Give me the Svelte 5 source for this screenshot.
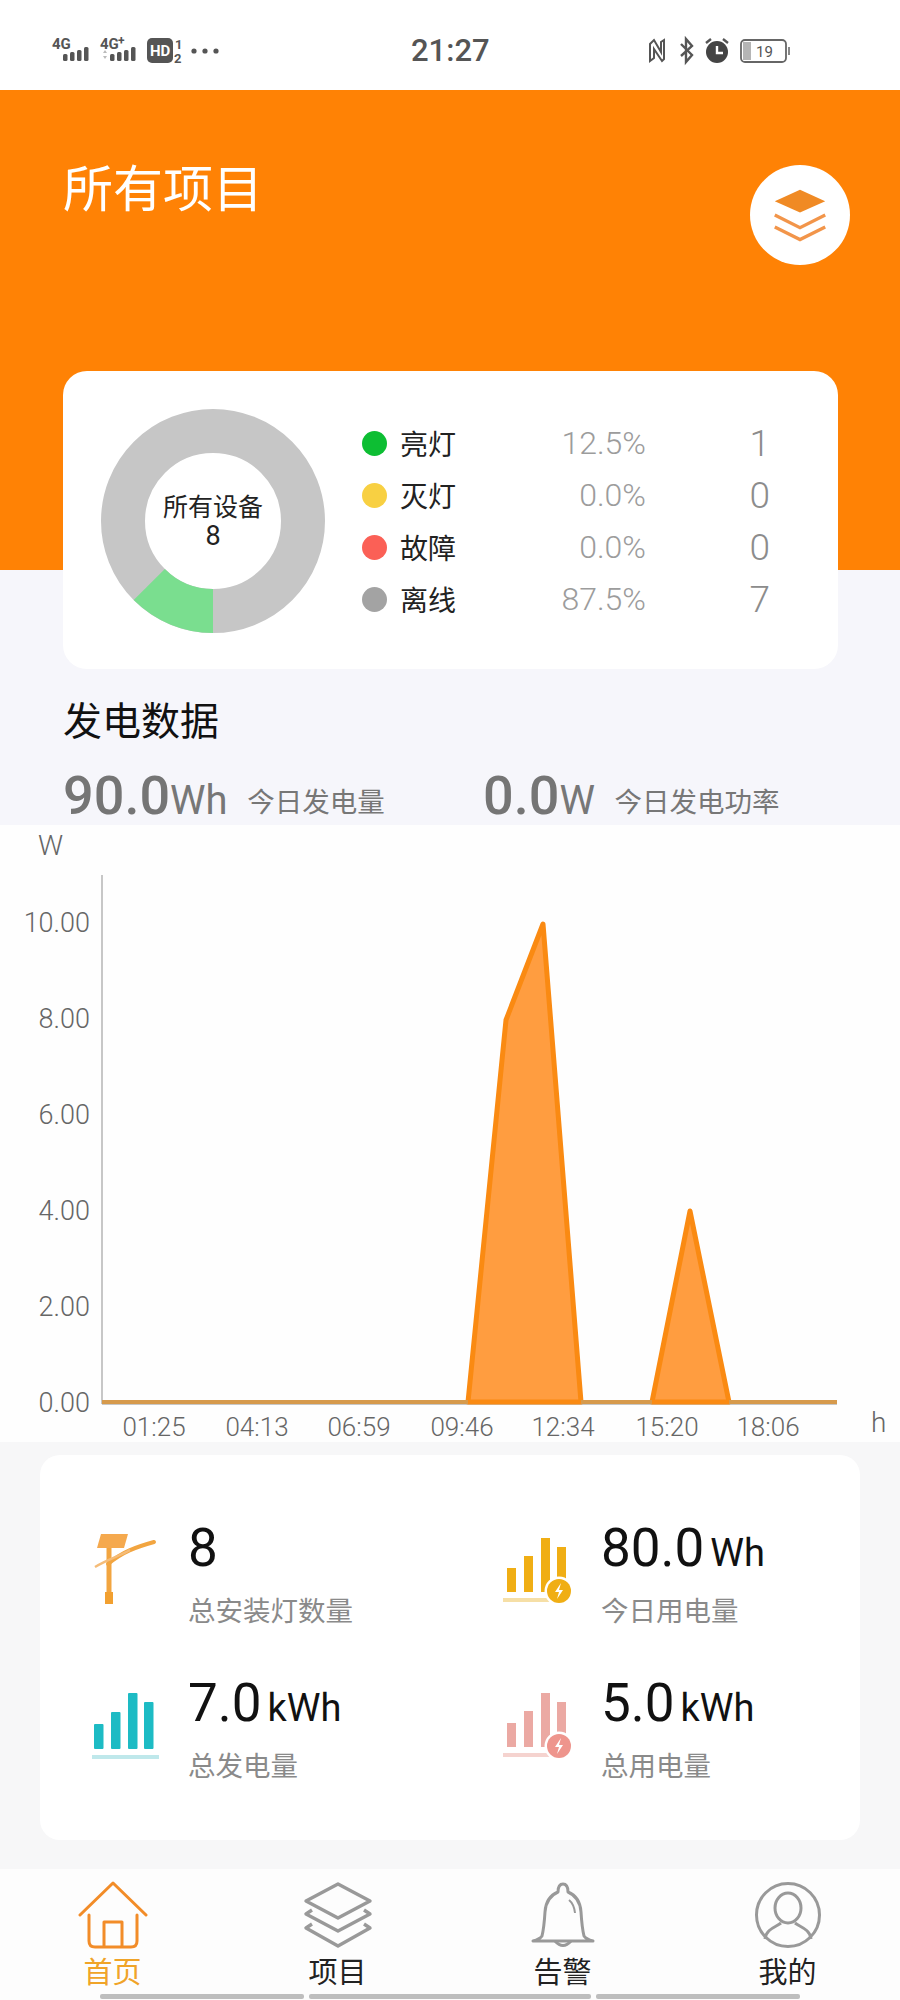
<script>
  const legend = [
    { label: '亮灯', color: '#0DBE33', pct: '12.5%', count: 1 },
    { label: '灭灯', color: '#F8D042', pct: '0.0%', count: 0 },
    { label: '故障', color: '#FB6056', pct: '0.0%', count: 0 },
    { label: '离线', color: '#A3A3A3', pct: '87.5%', count: 7 }
  ];

  const yTicks = [
    { label: '10.00', y: 99 },
    { label: '8.00', y: 195 },
    { label: '6.00', y: 291 },
    { label: '4.00', y: 387 },
    { label: '2.00', y: 483 },
    { label: '0.00', y: 579 }
  ];

  const xTicks = [
    { label: '01:25', x: 154 },
    { label: '04:13', x: 257 },
    { label: '06:59', x: 359 },
    { label: '09:46', x: 462 },
    { label: '12:34', x: 563 },
    { label: '15:20', x: 667 },
    { label: '18:06', x: 768 }
  ];

  // chart origin is y=823 on the page
  const peaks = [
    '468,577 506,195 543,99 581,577',
    '652,577 690,386 729,577'
  ];

  const stats = [
    { kind: 'lamp', value: '8', unit: '', label: '总安装灯数量' },
    { kind: 'use', color: '#F0AE14', ring: '#F0AE14', base: '#F6DFA6', value: '80.0', unit: 'Wh', label: '今日用电量' },
    { kind: 'gen', value: '7.0', unit: 'kWh', label: '总发电量' },
    { kind: 'use', color: '#EBA9A3', ring: '#EE958D', base: '#F5D3CF', value: '5.0', unit: 'kWh', label: '总用电量' }
  ];

  const tabs = [
    { icon: 'home', label: '首页', active: true },
    { icon: 'layers', label: '项目' },
    { icon: 'bell', label: '告警' },
    { icon: 'user', label: '我的' }
  ];

  const barsUse = [[4, 42, 24], [21, 30, 36], [38, 12, 54], [54, 21, 36]];
  const barsGen = [[4, 43, 25], [21, 31, 37], [38, 12, 56], [54, 21, 47]];
</script>

<div class="page">
  <div class="status">
    <svg class="status-left" width="200" height="40" viewBox="0 -3 200 40">
      <g fill="#555">
        <text x="2" y="13" class="net">4G</text>
        <rect x="13" y="18" width="4.5" height="7" rx="1.5" />
        <rect x="20" y="16" width="4.5" height="9" rx="1.5" />
        <rect x="27" y="14" width="4.5" height="11" rx="1.5" />
        <rect x="34" y="11" width="4.5" height="14" rx="1.5" />
        <text x="50" y="13" class="net">4G</text>
        <text x="68" y="9" class="plus">+</text>
        <path d="M53 17l2-3 2 3zM53 20l2 3 2-3z" fill="#bbb" />
        <rect x="60" y="18" width="4.5" height="7" rx="1.5" />
        <rect x="67" y="16" width="4.5" height="9" rx="1.5" />
        <rect x="74" y="14" width="4.5" height="11" rx="1.5" />
        <rect x="81" y="11" width="4.5" height="14" rx="1.5" />
        <rect x="97" y="2" width="26" height="25" rx="5" />
        <text x="100" y="20" class="hd">HD</text>
        <text x="125" y="13" class="sim">1</text>
        <text x="124" y="27" class="sim">2</text>
        <circle cx="144" cy="15" r="2.6" />
        <circle cx="155" cy="15" r="2.6" />
        <circle cx="166" cy="15" r="2.6" />
      </g>
    </svg>
    <div class="time">21:27</div>
    <svg class="status-right" width="150" height="40" viewBox="0 0 150 40">
      <g fill="none" stroke="#555" stroke-width="2.6">
        <path d="M1 8v17l4-3V13l8 12 2-2V4l-3 2v10L5 4z" stroke-width="2" />
        <path d="M32 8l11 11-6 7V3l6 7-11 10" stroke-width="2.4" />
      </g>
      <circle cx="68" cy="16" r="11" fill="#444" />
      <path d="M68 10v7h6" fill="none" stroke="#fff" stroke-width="2.4" />
      <path d="M57 7l5-4M79 7l-5-4" stroke="#555" stroke-width="2.4" />
      <rect x="92" y="4" width="45" height="22" rx="4" fill="#fff" stroke="#666" stroke-width="1.8" />
      <rect x="94" y="6" width="8" height="18" fill="#b5b5b5" />
      <rect x="139" y="11" width="2" height="8" fill="#888" />
      <text x="107" y="20.5" class="batt">19</text>
    </svg>
  </div>

  <div class="hero">
    <h1>所有项目</h1>
    <div class="switch">
      <svg width="58" height="58" viewBox="0 0 46 46">
        <path d="M23 3l20 9-20 9-20-9z" fill="#F08A24" />
        <path d="M3 23l20 10 20-10M3 32.5l20 10 20-10" fill="none" stroke="#F2954A" stroke-width="2.6" />
      </svg>
    </div>
  </div>

  <div class="summary">
    <div class="donut">
      <svg width="226" height="226" viewBox="0 0 226 226">
        <circle cx="113" cy="113" r="90" fill="none" stroke="#C6C6C6" stroke-width="44" />
        <circle cx="113" cy="113" r="90" fill="none" stroke="#7ADE8F" stroke-width="44"
          stroke-dasharray="70.69 565.49" transform="rotate(90 113 113)" />
      </svg>
      <div class="donut-text">
        <span>所有设备</span>
        <span class="donut-count">8</span>
      </div>
    </div>
    <div class="legend">
      {#each legend as row}
        <span class="dot" style:background={row.color}></span>
        <span class="legend-label">{row.label}</span>
        <span class="legend-pct">{row.pct}</span>
        <span class="legend-count">{row.count}</span>
      {/each}
    </div>
  </div>

  <div class="power">
    <h2>发电数据</h2>
    <div class="power-row">
      <div class="power-item first">
        <span class="power-value">90.0</span><span class="power-unit">Wh</span>
        <span class="power-label">今日发电量</span>
      </div>
      <div class="power-item">
        <span class="power-value">0.0</span><span class="power-unit">W</span>
        <span class="power-label">今日发电功率</span>
      </div>
    </div>
  </div>

  <div class="chart">
    <svg width="900" height="617" viewBox="0 0 900 617">
      <text x="38" y="30" class="axis-unit">W</text>
      <line x1="102" y1="50" x2="102" y2="579" stroke="#B5B5B5" stroke-width="1.5" />
      <line x1="102" y1="579" x2="837" y2="579" stroke="#B5B5B5" stroke-width="1.5" />
      {#each yTicks as t}
        <text x="90" y={t.y + 8} text-anchor="end" class="tick-y">{t.label}</text>
      {/each}
      {#each xTicks as t}
        <text x={t.x} y="611" text-anchor="middle" class="tick-x">{t.label}</text>
      {/each}
      <text x="871" y="607" class="axis-unit">h</text>
      {#each peaks as p}
        <polygon points={p} fill="#FF9D40" stroke="#FA8A12" stroke-width="5" stroke-linejoin="round" />
      {/each}
      <path d="M102 577H468M581 577H652M729 577H837" stroke="#D69A4C" stroke-width="4" fill="none" />
    </svg>
  </div>

  <div class="lower">
    <div class="totals">
      {#each stats as s}
        <div class="total">
          <svg class="total-icon" width="80" height="84" viewBox="0 0 80 84">
            {#if s.kind === 'lamp'}
              <path d="M11 8h27l-4 14H7z" fill="#F5A94E" />
              <path d="M19 22v48" stroke="#F2A540" stroke-width="5" fill="none" />
              <path d="M15 66h8v12h-8z" fill="#F2A030" />
              <path d="M18 38C32 26 46 21 64 16" stroke="#F2A540" stroke-width="4" fill="none" stroke-linecap="round" />
              <path d="M5 41C18 33 30 30 40 24" stroke="#F5BC78" stroke-width="2.4" fill="none" />
            {:else if s.kind === 'gen'}
              {#each barsGen as b}
                <rect x={b[0]} y={b[1]} width="9.5" height={b[2]} rx="1" fill="#1DBBC4" />
              {/each}
              <rect x="2" y="74" width="67" height="4" fill="#BFE8EB" />
            {:else}
              {#each barsUse as b}
                <rect x={b[0]} y={b[1]} width="9" height={b[2]} fill={s.color} />
              {/each}
              <rect x="0" y="72" width="48" height="4" fill={s.base} />
              <circle cx="56" cy="65" r="14.5" fill="#fff" />
              <circle cx="56" cy="65" r="12" fill={s.ring} />
              <path d="M58 57l-6 9h4l-2 7 6-9h-4z" fill="#fff" />
            {/if}
          </svg>
          <div class="total-text">
            <div class="total-value">{s.value}{#if s.unit}<small>{s.unit}</small>{/if}</div>
            <div class="total-label">{s.label}</div>
          </div>
        </div>
      {/each}
    </div>
  </div>

  <div class="tabbar">
    <div class="tabs">
      {#each tabs as tab}
        <div class="tab" class:active={tab.active}>
          <svg width="70" height="68" viewBox="0 0 70 68">
            {#if tab.icon === 'home'}
              <g fill="none" stroke="#F28C28" stroke-width="3" stroke-linejoin="round" stroke-linecap="round">
                <path d="M2 34L35 2l33 32" />
                <path d="M11 34v26q0 6 6 6h36q6 0 6-6V34" />
                <path d="M26 65V41h18v24" />
              </g>
            {:else if tab.icon === 'layers'}
              <g fill="none" stroke="#999" stroke-width="3.4" stroke-linejoin="round">
                <path d="M35 3l32 17-32 17L3 20z" />
                <path d="M9 29L3 33l32 17 32-17-6-4" />
                <path d="M9 43L3 47l32 18 32-18-6-4" />
              </g>
            {:else if tab.icon === 'bell'}
              <g fill="none" stroke="#999" stroke-width="3" stroke-linejoin="round">
                <path d="M35 3q-5 0-5 8-12 5-13 20-1 16-3 24-2 3-9 5h60q-7-2-9-5-2-8-3-24-1-15-13-20 0-8-5-8z" />
                <path d="M27 60q8 9 16 0" />
                <path d="M41 19q5 4 6 13" stroke-width="2" />
              </g>
            {:else}
              <g fill="none" stroke="#999" stroke-width="3">
                <circle cx="35" cy="34" r="31.5" />
                <ellipse cx="35" cy="27" rx="13" ry="15" />
                <path d="M12 58c1-10 11-12 16-16M58 58c-1-10-11-12-16-16" />
              </g>
            {/if}
          </svg>
          <span>{tab.label}</span>
        </div>
      {/each}
    </div>
    <div class="home-bars">
      <i class="side"></i><i class="mid"></i><i class="side"></i>
    </div>
  </div>
</div>

<style>
  :global(body) { margin: 0; background: #f6f6fa; }

  .page {
    width: 900px;
    height: 2000px;
    overflow: hidden;
    background: #f6f6fb;
    font-family: "Noto Sans CJK SC", "Noto Sans", sans-serif;
    display: flex;
    flex-direction: column;
  }

  .status {
    height: 90px;
    flex: none;
    box-sizing: border-box;
    padding: 33px 0 0 50px;
    background: #fff;
    display: grid;
    grid-template-columns: 361px 78px 1fr;
    align-items: start;
  }
  .status svg { display: block; }
  .status-right { margin: 3px 0 0 160px; }
  .time { font: 500 31px/36px Roboto, sans-serif; color: #555; text-align: center; }
  .net { font: 700 15px Roboto, sans-serif; }
  .plus { font: 700 12px Roboto, sans-serif; }
  .hd { font: 700 15px Roboto, sans-serif; fill: #fff; }
  .sim { font: 700 13px Roboto, sans-serif; }
  .batt { font: 400 15px Roboto, sans-serif; fill: #555; }

  .hero {
    height: 480px;
    flex: none;
    box-sizing: border-box;
    padding: 65px 50px 0 63px;
    background: #FF8205;
    display: flex;
    justify-content: space-between;
    align-items: flex-start;
  }
  h1 { margin: 0; font-size: 50px; line-height: 60px; font-weight: 400; color: #fff; }
  .switch {
    width: 100px;
    height: 100px;
    margin-top: 10px;
    border-radius: 50%;
    background: #fff;
    display: flex;
    align-items: center;
    justify-content: center;
  }

  .summary {
    height: 298px;
    flex: none;
    box-sizing: border-box;
    margin: -199px 62px 0 63px;
    padding: 37px 0 0 37px;
    background: #fff;
    border-radius: 24px;
    display: flex;
  }
  .donut { position: relative; width: 226px; height: 226px; flex: none; }
  .donut svg { display: block; }
  .donut-text {
    position: absolute;
    inset: 0;
    display: flex;
    flex-direction: column;
    align-items: center;
    justify-content: center;
    font-size: 25px;
    line-height: 30px;
    color: #222;
  }
  .donut-count { font-family: Roboto, sans-serif; font-size: 27px; line-height: 32px; }

  .legend {
    margin: 9px 0 0 36px;
    display: grid;
    grid-template-columns: 25px 120px 139px 124px;
    grid-auto-rows: 52px;
    align-items: center;
    align-self: flex-start;
  }
  .dot { width: 25px; height: 25px; border-radius: 50%; }
  .legend-label { margin-left: 13px; font-size: 28px; color: #222; }
  .legend-pct { font: 300 32px Roboto, sans-serif; color: #9c9c9c; text-align: right; }
  .legend-count { font: 300 37px Roboto, sans-serif; color: #8c8c8c; text-align: right; }

  .power {
    height: 156px;
    flex: none;
    box-sizing: border-box;
    padding: 24px 0 0 63px;
  }
  h2 { margin: 0; font-size: 39px; line-height: 50px; font-weight: 400; color: #111; }
  .power-row { margin-top: 23px; display: flex; align-items: baseline; }
  .power-item { white-space: nowrap; }
  .power-item.first { width: 420px; }
  .power-value { font: 500 54px/60px Roboto, sans-serif; color: #757575; }
  .power-unit { font: 400 40px Roboto, sans-serif; color: #777; }
  .power-label { margin-left: 16px; font-size: 27.5px; color: #777; vertical-align: 2px; }

  .chart { height: 617px; flex: none; background: #fefefe; }
  .chart svg { display: block; }
  .tick-x { font: 300 26px Roboto, sans-serif; fill: #666; }
  .tick-y { font: 300 27px Roboto, sans-serif; fill: #666; }
  .axis-unit { font: 300 28px Roboto, sans-serif; fill: #666; }

  .lower {
    height: 427px;
    flex: none;
    box-sizing: border-box;
    padding: 13px 40px 29px;
    background: #f7f7f8;
  }
  .totals {
    height: 385px;
    box-sizing: border-box;
    padding: 71px 0 0 50px;
    background: #fff;
    border-radius: 20px;
    display: grid;
    grid-template-columns: 413px 1fr;
    grid-auto-rows: 155px;
  }
  .total { display: flex; align-items: flex-start; }
  .total-icon { margin-right: 18px; flex: none; display: block; }
  .total-value { height: 44px; font: 400 53px/44px Roboto, sans-serif; color: #111; white-space: nowrap; }
  .total-value small { margin-left: 6px; font-size: 38px; }
  .total-label { margin-top: 20px; font-size: 27.5px; line-height: 38px; color: #8a8a8a; }

  .tabbar {
    height: 133px;
    flex: none;
    box-sizing: border-box;
    padding-top: 12px;
    background: #fdfdfd;
  }
  .tabs { display: flex; }
  .tab {
    flex: 1;
    display: flex;
    flex-direction: column;
    align-items: center;
    font-size: 29px;
    line-height: 30px;
    color: #222;
  }
  .tab svg { display: block; margin-bottom: 6px; }
  .tab.active { color: #F0A428; }
  .home-bars { margin-top: 9px; padding-left: 100px; display: flex; gap: 5px; }
  .home-bars i { height: 5px; border-radius: 2px; background: #BEBEBE; }
  .home-bars .side { width: 204px; }
  .home-bars .mid { width: 282px; }
</style>
